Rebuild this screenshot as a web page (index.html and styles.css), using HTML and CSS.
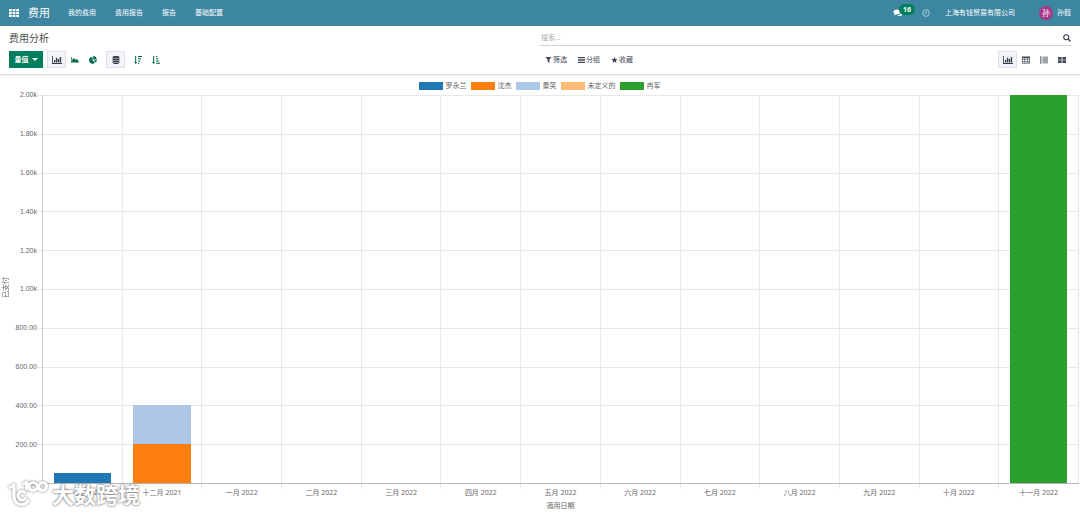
FILE: index.html
```
<!DOCTYPE html>
<html lang="zh-CN">
<head>
<meta charset="UTF-8">
<title>费用分析</title>
<link rel="stylesheet" href="styles.css">
</head>
<body>

<!-- 图标 -->
<svg class="sprite" aria-hidden="true">
	<symbol id="i-apps" viewBox="0 0 10 8"><path d="M0 0h2.800v2.200H0zM3.600 0h2.800v2.200H3.600zM7.200 0H10v2.200H7.200zM0 2.900h2.800v2.200H0zM3.600 2.900h2.800v2.200H3.600zM7.200 2.900H10v2.200H7.200zM0 5.800h2.800V8H0zM3.600 5.800h2.800V8H3.600zM7.200 5.800H10V8H7.200z"/></symbol>
	<symbol id="i-chat" viewBox="0 0 18 16"><path d="M7 1c3.900 0 7 2.200 7 5s-3.100 5-7 5c-.6 0-1.200 0-1.800-.2C4 11.800 2.500 12.400 1 12.500c.7-.7 1.200-1.500 1.300-2.600C.9 9 0 7.600 0 6c0-2.800 3.100-5 7-5z"/><path d="M15.200 5.500c1.700.8 2.800 2.200 2.800 3.800 0 1.400-.8 2.600-2.100 3.500.1 1 .6 1.700 1.300 2.400-1.500-.1-2.900-.6-4-1.500-2 .5-4.400.2-6-.8 4.800 0 8.300-3 8-7.400z"/></symbol>
	<symbol id="i-clock" viewBox="0 0 16 16"><circle cx="8" cy="8" r="6.700" fill="none" stroke="currentColor" stroke-width="1.600"/><path d="M8.500 4v4.700H5" fill="none" stroke="currentColor" stroke-width="1.600"/></symbol>
	<symbol id="i-search" viewBox="0 0 16 16"><circle cx="6.500" cy="6.500" r="5" fill="none" stroke="currentColor" stroke-width="2.200"/><path d="M10 10l5 5" stroke="currentColor" stroke-width="2.600"/></symbol>
	<symbol id="i-bar" viewBox="0 0 18 14"><path d="M0 0h1.500v12.500H18V14H0zM3.500 7H6v4.500H3.500zM7 3h2.500v8.500H7zM10.500 5H13v6.500h-2.500zM14 1.500h2.500v10H14z"/></symbol>
	<symbol id="i-area" viewBox="0 0 18 14"><path d="M0 0h1.500v12.500H18V14H0zM2.500 11.500V7L6 2.500l4 4 3-2 4 5v2z"/></symbol>
	<symbol id="i-pie" viewBox="0 0 16 16"><path d="M7 1.500V8.500l5 5A7 7 0 1 1 7 1.500z"/><path d="M8.500 0A7.200 7.200 0 0 1 15.500 7H8.500zM9 8.500h6.700a7 7 0 0 1-2 4.700z"/></symbol>
	<symbol id="i-stack" viewBox="0 0 14 16"><ellipse cx="7" cy="2.500" rx="7" ry="2.500"/><path d="M0 4.300C2 6.500 12 6.500 14 4.300V7c-2 2.500-12 2.500-14 0zM0 8.300c2 2.200 12 2.200 14 0V10.500c-2 2.500-12 2.500-14 0zM0 12c2 2.200 12 2.200 14 0v1.500c-2 3.300-12 3.300-14 0z"/></symbol>
	<symbol id="i-desc" viewBox="0 0 16 16"><path d="M2.300 0h2v12h2.200l-3.200 4L0 12h2.300zM8 0h8v2H8zM8 4.500h6v2H8zM8 9h4.500v2H8zM8 13.500h2.500v2H8z"/></symbol>
	<symbol id="i-asc" viewBox="0 0 16 16"><path d="M2.300 0h2v12h2.200l-3.200 4L0 12h2.300zM8 0h2.500v2H8zM8 4.500h4.500v2H8zM8 9h6v2H8zM8 13.500h8v2H8z"/></symbol>
	<symbol id="i-filter" viewBox="0 0 14 14"><path d="M0 0h14L9 6.500V14l-4-3V6.500z"/></symbol>
	<symbol id="i-lines" viewBox="0 0 14 12"><path d="M0 0h14v2H0zM0 3.400h14v2H0zM0 6.700h14v2H0zM0 10h14v2H0z"/></symbol>
	<symbol id="i-star" viewBox="0 0 16 16"><path d="M8 0l2.400 5.300 5.600.7-4.100 3.900 1 5.700L8 12.800l-4.900 2.800 1-5.700L0 6l5.600-.7z"/></symbol>
	<symbol id="i-table" viewBox="0 0 16 14"><path fill-rule="evenodd" d="M0 0h16v14H0zM1.300 3.500v2.300h3.600V3.500zM6.200 3.500v2.300h3.600V3.500zM11.100 3.500v2.300h3.600V3.500zM1.300 7v2.300h3.600V7zM6.200 7v2.300h3.600V7zM11.100 7v2.300h3.600V7zM1.300 10.500v2.200h3.600v-2.200zM6.200 10.500v2.200h3.600v-2.200zM11.100 10.500v2.200h3.600v-2.200z"/></symbol>
	<symbol id="i-list" viewBox="0 0 16 14"><path d="M0 0h3v2.500H0zM5 .3h11v1.800H5zM0 3.800h3v2.500H0zM5 4.100h11v1.800H5zM0 7.700h3v2.500H0zM5 8h11v1.800H5zM0 11.500h3V14H0zM5 11.800h11v1.800H5z"/></symbol>
	<symbol id="i-kanban" viewBox="0 0 16 12"><path d="M0 0h7.200v5.300H0zM8.800 0H16v5.300H8.800zM0 6.700h7.200V12H0zM8.800 6.700H16V12H8.800z"/></symbol>
</svg>

<header class="navbar">
	<button class="apps" type="button" aria-label="应用"><svg class="icon-wide"><use href="#i-apps"/></svg></button>
	<a class="brand" href="#">费用</a>
	<nav class="menu">
		<a href="#">我的费用</a>
		<a href="#">费用报告</a>
		<a href="#">报告</a>
		<a href="#">基础配置</a>
	</nav>
	<div class="systray">
		<button class="chat" type="button" aria-label="消息"><svg class="icon-wide"><use href="#i-chat"/></svg><span class="badge">16</span></button>
		<button class="activity" type="button" aria-label="活动"><svg class="icon-wide"><use href="#i-clock"/></svg></button>
		<a class="company" href="#">上海有钱贸易有限公司</a>
		<a class="user" href="#"><span class="avatar">孙</span>孙毅</a>
	</div>
</header>

<section class="panel">
	<div class="panel-left">
		<h1 class="title">费用分析</h1>
		<div class="tools">
			<button class="measure" type="button">量值<span class="caret"></span></button>
			<div class="group">
				<button class="tool on" type="button" aria-label="柱状图"><svg class="icon-wide"><use href="#i-bar"/></svg></button>
				<button class="tool" type="button" aria-label="折线图"><svg class="icon"><use href="#i-area"/></svg></button>
				<button class="tool" type="button" aria-label="饼图"><svg class="icon"><use href="#i-pie"/></svg></button>
			</div>
			<button class="tool on" type="button" aria-label="堆叠"><svg class="icon"><use href="#i-stack"/></svg></button>
			<div class="group">
				<button class="tool" type="button" aria-label="降序"><svg class="icon"><use href="#i-desc"/></svg></button>
				<button class="tool" type="button" aria-label="升序"><svg class="icon"><use href="#i-asc"/></svg></button>
			</div>
		</div>
	</div>
	<div class="panel-right">
		<div class="search">
			<input type="text" placeholder="搜索..." aria-label="搜索">
			<button type="button" aria-label="搜索"><svg class="icon"><use href="#i-search"/></svg></button>
		</div>
		<div class="options">
			<div class="filters">
				<button type="button"><svg class="icon-small"><use href="#i-filter"/></svg>筛选</button>
				<button type="button"><svg class="icon-small"><use href="#i-lines"/></svg>分组</button>
				<button type="button"><svg class="icon-small"><use href="#i-star"/></svg>收藏</button>
			</div>
			<div class="views">
				<button class="tool on" type="button" aria-label="图表"><svg class="icon-wide"><use href="#i-bar"/></svg></button>
				<button class="tool" type="button" aria-label="透视表"><svg class="icon"><use href="#i-table"/></svg></button>
				<button class="tool" type="button" aria-label="列表"><svg class="icon"><use href="#i-list"/></svg></button>
				<button class="tool" type="button" aria-label="看板"><svg class="icon"><use href="#i-kanban"/></svg></button>
			</div>
		</div>
	</div>
</section>

<main class="chart">
	<ul class="legend">
		<li><i class="swatch blue"></i>罗永兰</li>
		<li><i class="swatch orange"></i>沈杰</li>
		<li><i class="swatch light"></i>秦笑</li>
		<li><i class="swatch peach"></i>未定义的</li>
		<li><i class="swatch green"></i>冉军</li>
	</ul>
	<div class="y-title"><span>已支付</span></div>
	<div class="y-labels">
		<span>2.00k</span><span>1.80k</span><span>1.60k</span><span>1.40k</span><span>1.20k</span><span>1.00k</span><span>800.00</span><span>600.00</span><span>400.00</span><span>200.00</span><span>0.00</span>
	</div>
	<div class="plot">
		<div class="rows"><i></i><i></i><i></i><i></i><i></i><i></i><i></i><i></i><i></i><i></i></div>
		<div class="cols">
			<div class="col"><div class="bar blue" style="height:2.5%"></div></div>
			<div class="col"><div class="bar light" style="height:10%"></div><div class="bar orange" style="height:10%"></div></div>
			<div class="col"></div>
			<div class="col"></div>
			<div class="col"></div>
			<div class="col"></div>
			<div class="col"></div>
			<div class="col"></div>
			<div class="col"></div>
			<div class="col"></div>
			<div class="col"></div>
			<div class="col"></div>
			<div class="col"><div class="bar green" style="height:100%"></div></div>
		</div>
	</div>
	<div class="x-labels">
		<span>十一月 2021</span><span>十二月 2021</span><span>一月 2022</span><span>二月 2022</span><span>三月 2022</span><span>四月 2022</span><span>五月 2022</span><span>六月 2022</span><span>七月 2022</span><span>八月 2022</span><span>九月 2022</span><span>十月 2022</span><span>十一月 2022</span>
	</div>
	<div class="x-title">適用日期</div>
</main>

<div class="watermark">
	<svg class="mark" viewBox="0 0 40 28" aria-hidden="true"><g fill="none" stroke="#fff" stroke-width="3.200" stroke-linecap="round" stroke-linejoin="round"><path d="M2 8.500l4-2.500v11c0 5 3 8.500 7.500 8.500 3 0 5-1.200 6.500-3.500"/><path d="M17 13.500a4.300 4.300 0 1 0 .5 6"/><path d="M16 4.500l2.500-1.500v7"/><path d="M30 7.500c-1.500-3-3.500-4-5-4a4 4 0 0 0 0 8c2 0 3.500-1.500 5-4s3-4 4.500-4a4 4 0 0 1 0 8c-1.800 0-3.200-1.300-4.500-4z"/></g></svg>
	<span>大数跨境</span>
</div>

</body>
</html>
```
FILE: styles.css
```
*{box-sizing:border-box;}
body,h1,ul{margin:0;padding:0;}
body{display:flex;flex-direction:column;min-height:100vh;color:#4c4c4c;background:#fff;font:7px/12px "Noto Sans","Noto Sans CJK SC",sans-serif;}
a{color:inherit;text-decoration:none;}
ul{list-style:none;}
button{display:flex;align-items:center;justify-content:center;margin:0;padding:0;border:0;background:none;color:inherit;font:inherit;cursor:pointer;}
svg{display:block;fill:currentColor;}
.sprite{position:absolute;width:0;height:0;}
.icon{width:8px;height:8px;}
.icon-wide{width:10px;height:8px;}
.icon-small{width:7px;height:6px;}

/* 顶部导航 */
.navbar{display:flex;align-items:center;height:26px;padding:0 9px;color:#fff;background:#3c86a1;border-bottom:1px solid #35788f;}
.brand{margin-left:9px;font-size:11px;line-height:16px;}
.menu{display:flex;gap:19px;margin-left:18px;}
.systray{display:flex;align-items:center;margin-left:auto;}
.chat .badge{margin:-6px 0 0 -4px;padding:0 4px;border-radius:6px;height:11px;line-height:11px;background:#017e5c;font-weight:bold;}
.activity{margin-left:6px;opacity:.7;}
.company{margin-left:14px;}
.user{display:flex;align-items:center;gap:4px;margin-left:24px;}
.avatar{width:14px;height:14px;border-radius:50%;background:#a8378a;font-size:8px;line-height:14px;text-align:center;}

/* 控制面板 */
.panel{display:grid;grid-template-columns:1fr 1fr;padding:4px 9px;height:49px;border-bottom:1px solid #dcdde4;box-shadow:0 1px 2px #f0f1f6;}
.title{height:17px;color:#4c4c4c;font-size:10px;font-weight:normal;line-height:17px;}
.tools{display:flex;gap:4px;padding-top:4px;color:#01694c;}
.group,.views{display:flex;}
.measure{gap:3px;width:34px;height:17px;color:#fff;background:#017e5c;font-weight:bold;}
.caret{border:3px solid transparent;border-top-color:#fff;border-bottom:0;}
.tool{width:18px;height:17px;}
.tool.on{width:19px;border:1px solid #dfe1ea;background:#f3f4f9;color:#343a46;}
.search{display:flex;height:16px;border-bottom:1px solid #cfd2d6;color:#343a46;}
.search input{flex:1;min-width:0;padding:0 1px;border:0;outline:0;background:none;font:inherit;}
.search input::placeholder{color:#b0b0b0;}
.options{display:flex;justify-content:space-between;padding-top:5px;color:#434956;}
.filters{display:flex;gap:11px;padding-left:5px;}
.filters button{gap:1px;}

/* 图表 */
.chart{flex:1;display:grid;grid-template-columns:12px 25px 1fr;grid-template-rows:10px 1fr 17px 10px;padding:6px 1px 2px 0;color:#666;}
.legend{grid-column:1 / -1;display:flex;justify-content:center;gap:4px;line-height:10px;}
.legend li{display:flex;align-items:center;gap:3px;}
.swatch{width:24px;height:8px;}
.blue{background:#1f77b4;}
.orange{background:#ff7f0e;}
.light{background:#aec7e8;}
.peach{background:#ffbb78;}
.green{background:#2ca02c;}
.y-title{display:flex;align-items:center;justify-content:center;}
.y-title span{writing-mode:vertical-rl;text-orientation:sideways;transform:rotate(180deg);}
.y-labels{display:flex;flex-direction:column;justify-content:space-between;margin:-2px 0 -6px;text-align:right;font-family:"Liberation Sans",sans-serif;}
.plot{display:grid;margin-top:4px;}
.rows,.cols{grid-area:1 / 1;display:grid;}
.rows{grid-template-rows:repeat(10,1fr);border-bottom:1px solid #b5b5b5;}
.rows i{border-top:1px solid #e8e8e8;}
.cols{grid-template-columns:repeat(13,1fr);margin:0 0 1px 5px;border-right:1px solid #e8e8e8;}
.col{display:flex;flex-direction:column;align-items:center;justify-content:flex-end;border-left:1px solid #e8e8e8;}
.col:first-child{border-color:#ccc;}
.bar{width:73%;}
.x-labels{grid-column:3;display:grid;grid-template-columns:repeat(13,1fr);margin-left:5px;border-right:1px solid #fff;text-align:center;}
.x-labels span{padding-top:3px;border-left:1px solid;border-image:linear-gradient(#e8e8e8 5px,transparent 5px) 1;}
.x-title{grid-column:3;margin-left:5px;line-height:10px;text-align:center;}

/* 水印 */
.watermark{position:absolute;left:8px;bottom:5px;display:flex;align-items:center;gap:4px;color:#fff;font:bold 22px/30px "Noto Sans CJK SC",sans-serif;text-shadow:0 0 2px #777,0 0 3px #999;}
.mark{width:40px;height:28px;fill:none;filter:drop-shadow(0 0 1px #777);}
```
